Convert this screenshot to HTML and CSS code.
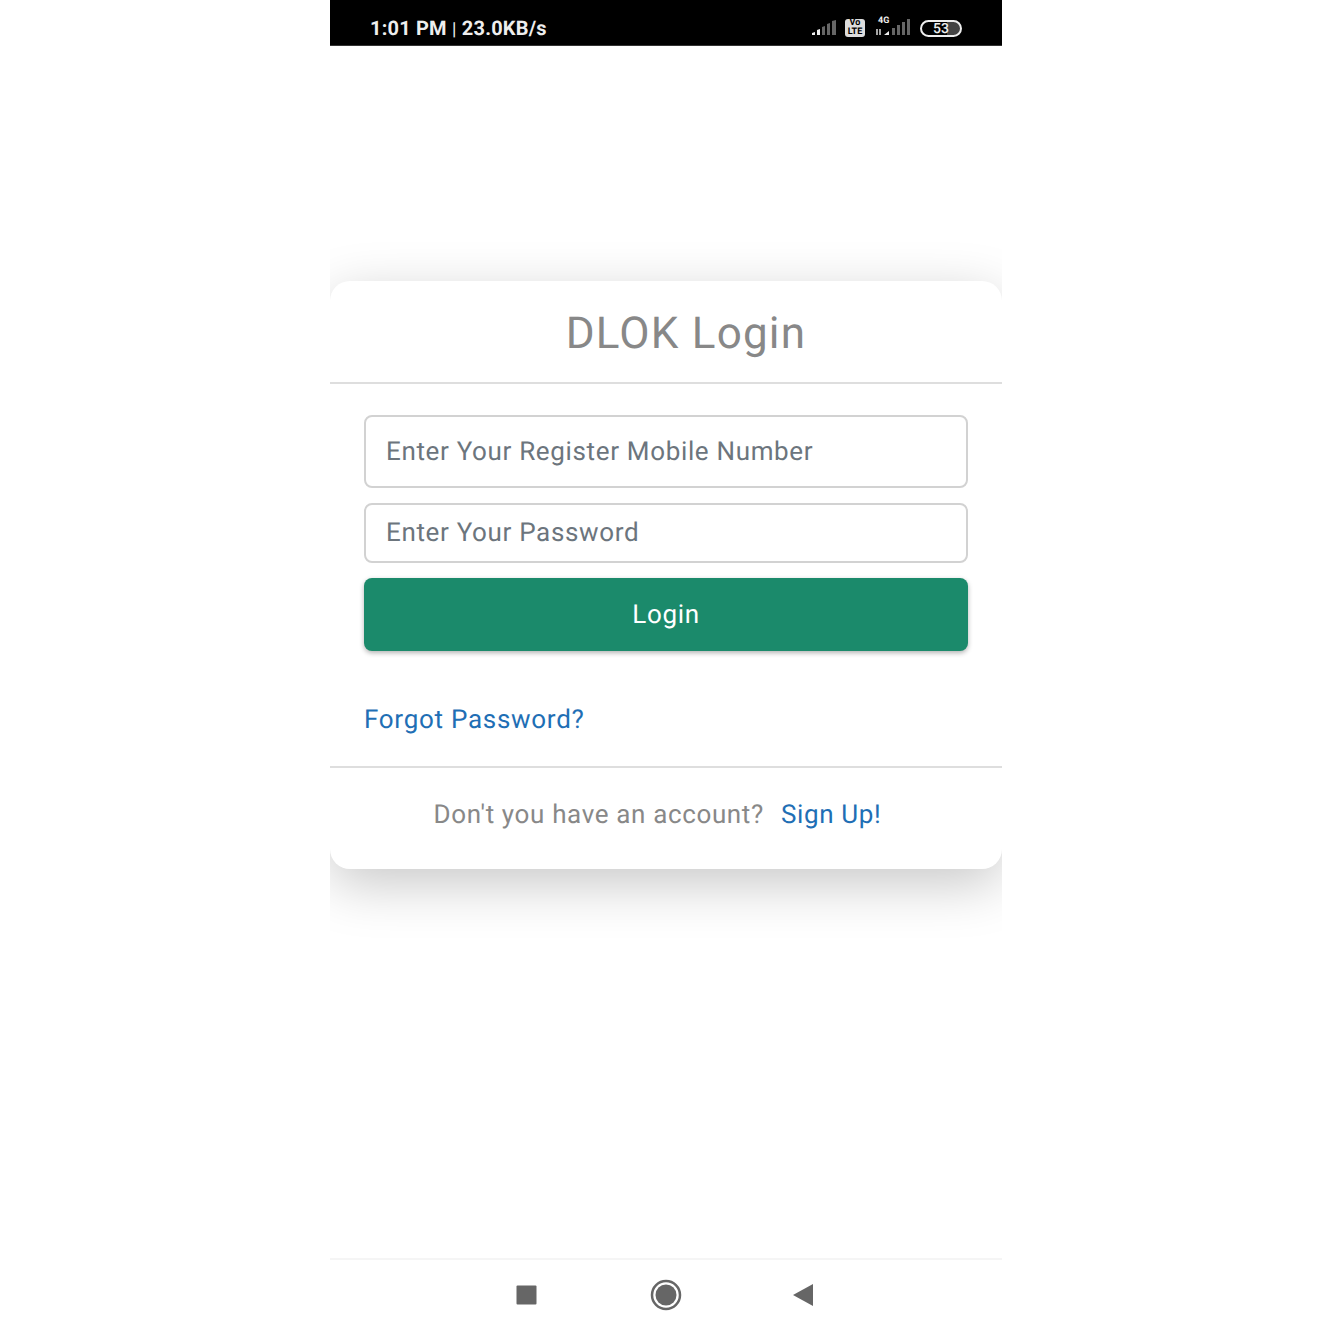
FILE: index.html
```html
<!DOCTYPE html>
<html lang="en">
<head>
  <meta charset="UTF-8">
  <title>DLOK Login</title>
  <link rel="stylesheet" href="styles.css">
</head>
<body>
  <div class="phone">
    <div class="status-bar">
      <div class="status-text">1:01 PM <span class="status-sep">|</span> 23.0KB/s</div>
      <div class="status-icons">
        <svg class="signal" width="26" height="18" viewBox="0 0 26 18">
          <path d="M0 16v-2l3-1v3z" fill="#eee"/>
          <path d="M5 16v-5l3-1v6z" fill="#eee"/>
          <path d="M10 16V8l3-1v9z" fill="#666"/>
          <path d="M15 16V5l3-1v12z" fill="#666"/>
          <path d="M20 16V2l4-1v15z" fill="#666"/>
        </svg>
        <div class="volte"><span>Vo</span><span>LTE</span></div>
        <div class="net">
          <span class="net-label">4G</span>
          <svg width="38" height="18" viewBox="0 0 38 18">
            <path d="M3 10v6M6 16v-6" stroke="#ddd" stroke-width="1.5"/>
            <path d="M10 16l5-4v4z" fill="#eee"/>
            <rect x="18" y="9" width="3" height="7" fill="#666"/>
            <rect x="23" y="6" width="3" height="10" fill="#666"/>
            <rect x="28" y="3" width="3" height="13" fill="#666"/>
            <rect x="33" y="0" width="3" height="16" fill="#666"/>
          </svg>
        </div>
        <div class="battery">53</div>
      </div>
    </div>

    <main class="content">
      <div class="card">
        <h2 class="card-title">DLOK Login</h2>
        <form class="login-form" onsubmit="return false">
          <input class="field field-tall" type="text" placeholder="Enter Your Register Mobile Number">
          <input class="field" type="password" placeholder="Enter Your Password">
          <button class="login-btn">Login</button>
          <a class="forgot" href="#">Forgot Password?</a>
        </form>
        <div class="card-footer">
          <span>Don't you have an account?</span>
          <a href="#">Sign Up!</a>
        </div>
      </div>
    </main>

    <nav class="nav-bar">
      <svg width="22" height="20" viewBox="0 0 22 20"><rect x="0.5" y="0.5" width="20" height="19" rx="1" fill="#666"/></svg>
      <svg width="32" height="32" viewBox="0 0 32 32">
        <circle cx="16" cy="16" r="14" fill="none" stroke="#666" stroke-width="2.5"/>
        <circle cx="16" cy="16" r="10.5" fill="#666"/>
      </svg>
      <svg width="20" height="22" viewBox="0 0 20 22"><path d="M0 11L20 0v22z" fill="#666"/></svg>
    </nav>
  </div>
</body>
</html>
```

FILE: styles.css
```css
* {
  box-sizing: border-box;
}
body {
  margin: 0;
  background: #fff;
  font-family: Roboto, "Liberation Sans", sans-serif;
  text-rendering: geometricPrecision;
}
.phone {
  display: flex;
  flex-direction: column;
  width: 672px;
  height: 1332px;
  margin: 0 auto;
  overflow: hidden;
}
.status-bar {
  display: flex;
  justify-content: space-between;
  align-items: center;
  flex: 0 0 46px;
  padding: 11px 40px 0;
  border-bottom: 1px solid #333;
  background: #000;
  color: #eee;
}
.status-text {
  font-size: 20px;
  font-weight: 700;
  letter-spacing: 0.2px;
}
.status-sep {
  font-size: 18px;
  font-weight: 400;
}
.status-icons {
  display: flex;
  align-items: center;
}
.signal {
  margin-right: 7px;
}
.volte {
  display: flex;
  flex-direction: column;
  align-items: center;
  width: 20px;
  height: 18px;
  border-radius: 3px;
  background: #ddd;
  color: #000;
  font-size: 9px;
  font-weight: 700;
  line-height: 9px;
  margin-right: 11px;
}
.net {
  position: relative;
  margin-right: 8px;
  margin-left: -2px;
  height: 18px;
}
.net svg {
  display: block;
  width: 38px;
  height: 18px;
}
.net-label {
  position: absolute;
  top: -3px;
  left: 4px;
  font-size: 9px;
  font-weight: 700;
}
.battery {
  width: 42px;
  height: 17px;
  border: 2px solid #eee;
  border-radius: 9px;
  background: linear-gradient(90deg, #000 65%, #444 65%);
  font-size: 14px;
  font-weight: 500;
  line-height: 14px;
  text-align: center;
}
.content {
  flex: 1;
  padding-top: 235px;
}
.card {
  height: 588px;
  border-radius: 20px;
  background: #fff;
  box-shadow: 0 15px 54px rgba(0, 0, 0, 0.22);
}
.card-title {
  height: 103px;
  margin: 0;
  padding: 27px 0 0 40px;
  border-bottom: 2px solid #dedede;
  color: #888;
  font-size: 44px;
  font-weight: 400;
  line-height: 50px;
  letter-spacing: 1.2px;
  text-align: center;
}
.login-form {
  display: flex;
  flex-direction: column;
  height: 384px;
  padding: 31px 34px 0;
  border-bottom: 2px solid #dedede;
}
.field {
  height: 60px;
  margin-bottom: 15px;
  padding: 0 20px;
  border: 2px solid #d2d2d2;
  border-radius: 8px;
  font-family: inherit;
  font-size: 26px;
  letter-spacing: 0.66px;
  text-rendering: geometricPrecision;
}
.field::placeholder {
  color: #6c757d;
  opacity: 1;
}
.field-tall {
  height: 73px;
}
.login-btn {
  flex: 0 0 73px;
  border: 0;
  border-radius: 8px;
  background: #1b8a6b;
  box-shadow: 0 2px 5px rgba(0, 0, 0, 0.3);
  color: #fff;
  font-family: inherit;
  font-size: 26px;
  letter-spacing: 0.66px;
  text-rendering: geometricPrecision;
}
.forgot {
  margin-top: 54px;
  color: #1f6fb5;
  font-size: 26px;
  letter-spacing: 0.72px;
  text-decoration: none;
}
.card-footer {
  display: flex;
  justify-content: center;
  gap: 17px;
  padding: 32px 17px 0 0;
  color: #888;
  font-size: 26px;
  letter-spacing: 0.64px;
}
.card-footer a {
  color: #1f6fb5;
  text-decoration: none;
}
.nav-bar {
  display: flex;
  justify-content: space-between;
  align-items: center;
  flex: 0 0 74px;
  padding: 0 189px 2px 186px;
  border-top: 2px solid #f5f5f5;
}
```
